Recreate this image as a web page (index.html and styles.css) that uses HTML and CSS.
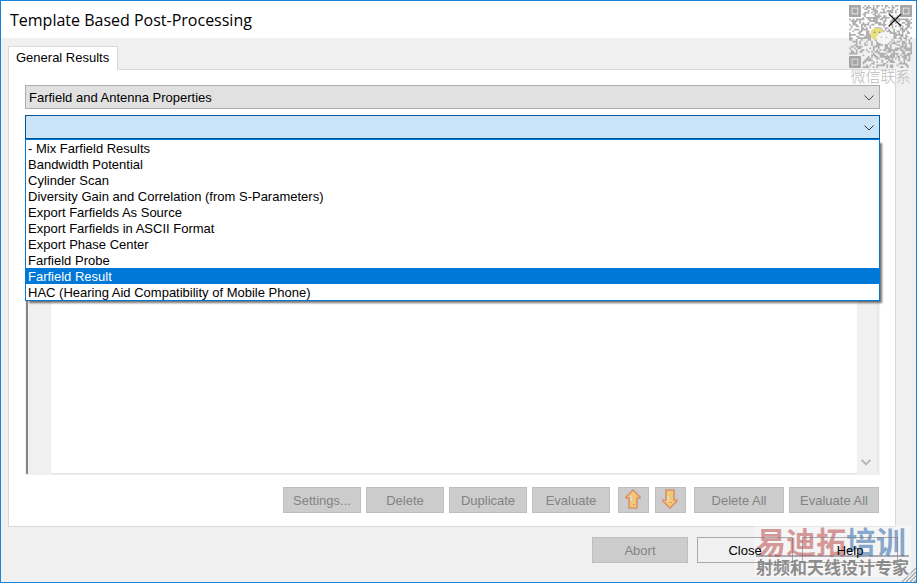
FILE: index.html
```
<!DOCTYPE html>
<html lang="en">
<head>
    <meta charset="UTF-8">
    <meta name="viewport" content="width=device-width, initial-scale=1.0">
    <title>Template Based Post-Processing</title>
    <link rel="stylesheet" href="styles.css">
</head>
<body>
    <div class="window">
        <header class="titlebar">
            <h1>Template Based Post-Processing</h1>
            <button type="button" class="close-x" aria-label="Close window">
                <svg width="14" height="14" viewBox="0 0 14 14"><path d="M1 1L13 13M13 1L1 13" stroke="#1a101a" stroke-width="1.2" fill="none"/></svg>
            </button>
        </header>

        <main class="content">
            <div class="tabs" role="tablist">
                <button type="button" class="tab" role="tab" aria-selected="true">General Results</button>
            </div>
            <section class="panel">
                <div class="combo">
                    <select class="combo-field" aria-label="Template category">
                        <option>Farfield and Antenna Properties</option>
                    </select>
                    <svg class="chevron" width="10" height="6" viewBox="0 0 10 6"><path d="M0.5 0.5L5 5L9.5 0.5" stroke="#444" fill="none"/></svg>
                </div>
                <div class="combo">
                    <select class="combo-field open" aria-label="Template">
                        <option></option>
                    </select>
                    <svg class="chevron" width="10" height="6" viewBox="0 0 10 6"><path d="M0.5 0.5L5 5L9.5 0.5" stroke="#333" fill="none"/></svg>
                    <select class="dropdown" size="10" aria-label="Template choices">
                        <option>- Mix Farfield Results</option>
                        <option>Bandwidth Potential</option>
                        <option>Cylinder Scan</option>
                        <option>Diversity Gain and Correlation (from S-Parameters)</option>
                        <option>Export Farfields As Source</option>
                        <option>Export Farfields in ASCII Format</option>
                        <option>Export Phase Center</option>
                        <option>Farfield Probe</option>
                        <option selected>Farfield Result</option>
                        <option>HAC (Hearing Aid Compatibility of Mobile Phone)</option>
                    </select>
                </div>

                <div class="results">
                    <div class="row-header"></div>
                    <div class="rows"></div>
                    <div class="scrollbar">
                        <svg width="10" height="7" viewBox="0 0 10 7"><path d="M0.7 0.9L5 5.4L9.3 0.9" stroke="#b4b4b4" stroke-width="2" fill="none"/></svg>
                    </div>
                </div>

                <div class="toolbar">
                    <div class="group">
                        <button type="button" class="btn" disabled>Settings...</button>
                        <button type="button" class="btn" disabled>Delete</button>
                        <button type="button" class="btn" disabled>Duplicate</button>
                        <button type="button" class="btn" disabled>Evaluate</button>
                    </div>
                    <div class="group arrows">
                        <button type="button" class="btn icon" disabled aria-label="Move up">
                            <svg width="16" height="20" viewBox="0 0 16 20"><path d="M8 1L15 8V9H12V19H4V9H1V8Z" fill="#f0c878" stroke="#d9926a" stroke-width="1.6"/><path d="M6 7V12" stroke="#dcdcd8" stroke-width="1.6"/><path d="M8 15.5h2" stroke="#d9926a"/></svg>
                        </button>
                        <button type="button" class="btn icon" disabled aria-label="Move down">
                            <svg width="16" height="20" viewBox="0 0 16 20"><path d="M8 19L15 12V11H12V1H4V11H1V12Z" fill="#f0c878" stroke="#d9926a" stroke-width="1.6"/><path d="M6 7V12" stroke="#dcdcd8" stroke-width="1.6"/><path d="M8 13.5h2" stroke="#d9926a"/></svg>
                        </button>
                    </div>
                    <div class="group">
                        <button type="button" class="btn wide" disabled>Delete All</button>
                        <button type="button" class="btn wide" disabled>Evaluate All</button>
                    </div>
                </div>
            </section>
        </main>

        <footer class="footer">
            <button type="button" class="btn dialog" disabled>Abort</button>
            <button type="button" class="btn dialog">Close</button>
            <button type="button" class="btn dialog">Help</button>
        </footer>

        <svg class="grip" width="14" height="14" viewBox="0 0 14 14"><path d="M0 14L14 0M4 14L14 4M8 14L14 8M12 14L14 12" stroke="#a0a0a0" stroke-width="1.2"/></svg>

        <div class="qr">
            <svg id="qrCode" width="63" height="63" viewBox="0 0 37 37"></svg>
            <span>微信联系</span>
        </div>

        <div class="brand">
            <div class="brand-name"><span class="red">易迪拓</span><span class="blue">培训</span></div>
            <div class="brand-line">射频和天线设计专家</div>
        </div>
    </div>

    <script src="qr.js"></script>
</body>
</html>
```
FILE: styles.css
```
* {
    margin: 0;
    padding: 0;
    box-sizing: border-box;
}

body {
    font-family: "Liberation Sans", Arial, sans-serif;
    font-size: 13px;
    line-height: 16px;
    color: #000;
}

button,
select {
    font: inherit;
    color: inherit;
}

.window {
    position: relative;
    display: flex;
    flex-direction: column;
    min-height: 100vh;
    background-color: #f0f0f0;
    border: 1px solid #1883d7;
    overflow: hidden;
}

.titlebar {
    display: flex;
    align-items: center;
    justify-content: space-between;
    height: 37px;
    padding: 0 14px 0 9px;
    background-color: #fff;
}

.titlebar h1 {
    font-family: "Open Sans", "Noto Sans", sans-serif;
    font-size: 16px;
    font-weight: normal;
    line-height: 20px;
}

.close-x {
    position: relative;
    z-index: 3;
    display: flex;
    background: none;
    border: none;
}

/* tabs */
.content {
    flex: 1;
    display: flex;
    flex-direction: column;
    padding: 8px 20px 0 7px;
}

.tabs {
    display: flex;
}

.tab {
    position: relative;
    z-index: 1;
    height: 24px;
    margin-bottom: -1px;
    padding: 0 8px 2px 7px;
    background-color: #fff;
    border: 1px solid #d9d9d9;
    border-bottom: none;
}

.panel {
    flex: 1;
    display: flex;
    flex-direction: column;
    padding: 15px 15px 13px 16px;
    background-color: #fff;
    border: 1px solid #d9d9d9;
}

/* combo boxes */
.combo {
    position: relative;
    display: flex;
    margin-bottom: 6px;
}

.combo-field {
    appearance: none;
    width: 100%;
    height: 24px;
    padding: 2px 3px 0;
    background-color: #e1e1e1;
    border: 1px solid #adadad;
    border-radius: 0;
}

.combo-field.open {
    background-color: #cce4f7;
    border-color: #005499;
}

.chevron {
    position: absolute;
    right: 6px;
    top: 10px;
    pointer-events: none;
}

.dropdown {
    position: absolute;
    z-index: 2;
    top: 24px;
    left: 0;
    width: 100%;
    height: 162px;
    background-color: #fff;
    border: 1px solid #0078d7;
    border-radius: 0;
    box-shadow: 3px 3px 2px -1px rgba(0, 0, 0, 0.55);
    outline: none;
    overflow: hidden;
}

.dropdown option {
    height: 16px;
    min-height: 16px;
    padding: 1px 2px 0;
    line-height: 16px;
}

.dropdown option:checked {
    background: linear-gradient(#0078d7, #0078d7);
    -webkit-text-fill-color: #fff;
}

/* results list */
.results {
    flex: 1;
    display: flex;
    min-height: 120px;
    border: 1px solid #f0f0f0;
    border-right-width: 2px;
}

.row-header {
    width: 25px;
    background-color: #f0f0f0;
    border-left: 2px solid #8c8484;
}

.rows {
    flex: 1;
    border-bottom: 1px solid #e3e3e3;
}

.scrollbar {
    display: flex;
    align-items: flex-end;
    justify-content: center;
    width: 21px;
    padding: 0 2px 8px 0;
    background-color: #f0f0f0;
    border-right: 1px solid #e3e3e3;
}

/* buttons */
.toolbar {
    display: flex;
    justify-content: flex-end;
    gap: 8px;
    margin: 12px 1px 0 0;
}

.group {
    display: flex;
    gap: 5px;
}

.group.arrows {
    gap: 6px;
}

.btn {
    display: flex;
    align-items: center;
    justify-content: center;
    width: 78px;
    height: 26px;
    padding-top: 2px;
    background-color: transparent;
    border: 1px solid #adadad;
}

.btn:disabled {
    color: #838383;
    background-color: #ccc;
    border-color: #bfbfbf;
}

.btn.icon {
    width: 31px;
    padding: 0 1px 2px 0;
}

.btn.wide {
    width: 90px;
}

.btn.dialog {
    width: 96px;
}

.footer {
    position: relative;
    z-index: 3;
    display: flex;
    justify-content: flex-end;
    gap: 9px;
    padding: 10px 18px 19px;
}

.footer .btn:enabled {
    border-color: rgba(120, 120, 120, 0.6);
}

.grip {
    position: absolute;
    right: 0;
    bottom: 0;
}

/* overlays */
.qr {
    position: absolute;
    z-index: 2;
    top: 4px;
    right: 4px;
    display: flex;
    flex-direction: column;
    align-items: center;
    font-family: "Noto Sans CJK SC", sans-serif;
    font-size: 15px;
    font-weight: 300;
    color: #bbb;
    pointer-events: none;
}

.brand {
    position: absolute;
    z-index: 2;
    right: 5px;
    bottom: 5px;
    padding: 0 2px;
    background-color: rgba(255, 255, 255, 0.35);
    font-family: "Noto Sans CJK SC", sans-serif;
    font-weight: bold;
    pointer-events: none;
}

.brand-name {
    font-size: 30px;
    line-height: 30px;
    border-bottom: 2px solid rgba(110, 110, 120, 0.55);
}

.brand-name .red {
    color: rgba(180, 60, 60, 0.5);
}

.brand-name .blue {
    color: rgba(40, 100, 170, 0.55);
}

.brand-line {
    font-size: 17px;
    line-height: 20px;
    color: rgba(80, 80, 80, 0.65);
}
```
FILE: qr.js
```
const SIZE = 37;
const qrCode = document.getElementById('qrCode');
let seed = 11;

function nextBit() {
    seed = (seed * 1103515245 + 12345) % 2147483648;
    return (seed >> 16) & 1;
}

function inFinder(x, y) {
    const far = SIZE - 8;
    return (x < 8 && y < 8) || (x >= far && y < 8) || (x < 8 && y >= far);
}

let modules = '';
for (let y = 0; y < SIZE; y++) {
    for (let x = 0; x < SIZE; x++) {
        if (nextBit() && !inFinder(x, y)) {
            modules += `M${x} ${y}h1v1h-1z`;
        }
    }
}

const finder = (x, y) =>
    `<path d="M${x + 0.8} ${y + 0.8}h5.4v5.4h-5.4z" fill="none" stroke="#a6a6a6" stroke-width="1.6"/>` +
    `<rect x="${x + 2}" y="${y + 2}" width="3" height="3" fill="#a6a6a6"/>`;

// modules, the three corner markers, then the chat bubbles in the middle
qrCode.innerHTML =
    `<path d="${modules}" fill="#b0b0b0"/>` +
    finder(0, 0) + finder(SIZE - 7, 0) + finder(0, SIZE - 7) +
    '<ellipse cx="16.5" cy="17" rx="4" ry="3.6" fill="#e8e07c"/>' +
    '<ellipse cx="20.5" cy="19.5" rx="4.4" ry="3.6" fill="#f4f4f4"/>' +
    '<circle cx="15" cy="16" r="0.5" fill="#888"/><circle cx="18" cy="16" r="0.5" fill="#888"/>' +
    '<circle cx="19" cy="19" r="0.4" fill="#aaa"/><circle cx="22" cy="19" r="0.4" fill="#aaa"/>';
```
